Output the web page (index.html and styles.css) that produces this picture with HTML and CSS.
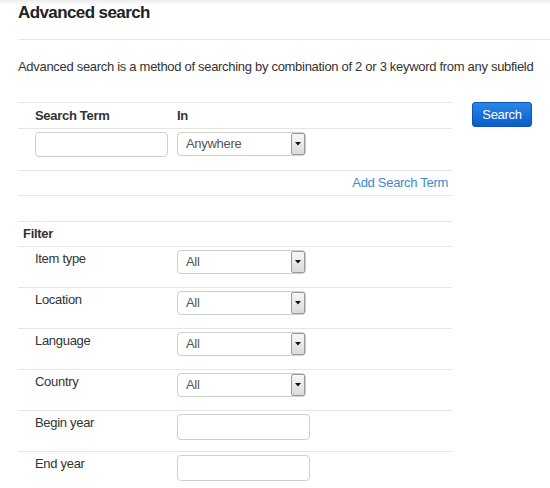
FILE: index.html
```html
<!DOCTYPE html>
<html>
<head>
<meta charset="utf-8">
<link rel="stylesheet" href="styles.css">
</head>
<body>
<div class="topshade"></div>
<div class="page">
  <h1 class="title">Advanced search</h1>
  <p class="desc">Advanced search is a method of searching by combination of 2 or 3 keyword from any subfield</p>

  <div class="main">
    <div class="tables">
      <div class="tbl">
        <div class="row head">
          <div class="c1 b">Search Term</div>
          <div class="c2 b">In</div>
        </div>
        <div class="row inputs">
          <div class="c1"><input class="text term" type="text"></div>
          <div class="c2">
            <div class="sel">
              <span class="sel-val">Anywhere</span>
              <span class="sel-arrow"><svg width="6" height="4" viewBox="0 0 6 4"><path d="M0 0H6L3 3.5Z" fill="#111"/></svg></span>
            </div>
          </div>
        </div>
        <div class="row linkrow">
          <a class="add" href="#">Add Search Term</a>
        </div>
      </div>

      <div class="tbl filter">
        <div class="row head">
          <div class="fhead b">Filter</div>
        </div>
        <div class="row frow">
          <div class="c1 lbl">Item type</div>
          <div class="c2"><div class="sel"><span class="sel-val">All</span><span class="sel-arrow"><svg width="6" height="4" viewBox="0 0 6 4"><path d="M0 0H6L3 3.5Z" fill="#111"/></svg></span></div></div>
        </div>
        <div class="row frow">
          <div class="c1 lbl">Location</div>
          <div class="c2"><div class="sel"><span class="sel-val">All</span><span class="sel-arrow"><svg width="6" height="4" viewBox="0 0 6 4"><path d="M0 0H6L3 3.5Z" fill="#111"/></svg></span></div></div>
        </div>
        <div class="row frow">
          <div class="c1 lbl">Language</div>
          <div class="c2"><div class="sel"><span class="sel-val">All</span><span class="sel-arrow"><svg width="6" height="4" viewBox="0 0 6 4"><path d="M0 0H6L3 3.5Z" fill="#111"/></svg></span></div></div>
        </div>
        <div class="row frow">
          <div class="c1 lbl">Country</div>
          <div class="c2"><div class="sel"><span class="sel-val">All</span><span class="sel-arrow"><svg width="6" height="4" viewBox="0 0 6 4"><path d="M0 0H6L3 3.5Z" fill="#111"/></svg></span></div></div>
        </div>
        <div class="row frow">
          <div class="c1 lbl">Begin year</div>
          <div class="c2"><input class="text year" type="text"></div>
        </div>
        <div class="row frow">
          <div class="c1 lbl">End year</div>
          <div class="c2"><input class="text year" type="text"></div>
        </div>
      </div>
    </div>
    <button class="btn" type="button">Search</button>
  </div>
</div>
</body>
</html>
```
FILE: styles.css
```css
html, body {
  margin: 0;
  padding: 0;
  background: #fff;
}
body {
  font-family: "Liberation Sans", Arial, sans-serif;
  font-size: 13px;
  letter-spacing: -0.3px;
  color: #333;
  width: 550px;
  height: 488px;
  overflow: hidden;
  position: relative;
}
.topshade {
  position: absolute;
  left: 0;
  top: 0;
  right: 0;
  height: 5px;
  background: linear-gradient(#ececec, rgba(255,255,255,0));
}
.page {
  padding-left: 18px;
}
.title {
  margin: 0;
  padding: 3px 0 16px 0;
  font-size: 17px;
  letter-spacing: -0.6px;
  line-height: 20px;
  font-weight: bold;
  color: #222;
  border-bottom: 1px solid #e8e8e8;
}
.desc {
  margin: 19px 0 0 0;
  line-height: 16px;
  white-space: nowrap;
  color: #333;
}
.main {
  display: flex;
  align-items: flex-start;
  margin-top: 27px;
}
.tables {
  width: 434px;
}
.tbl {
  border-bottom: 1px solid #e6e6e6;
}
.tbl.filter {
  border-bottom: none;
  margin-top: 25px;
}
.row {
  display: flex;
  border-top: 1px solid #e6e6e6;
  align-items: flex-start;
}
.b {
  font-weight: bold;
  color: #333;
}
.c1 {
  width: 142px;
  padding-left: 17px;
}
.c2 {
  flex: 1;
}
.head {
  height: 25px;
  line-height: 25px;
}
.filter .head {
  height: 24px;
  line-height: 24px;
}
.fhead {
  padding-left: 5px;
}
.inputs {
  padding-top: 3px;
  box-sizing: border-box;
  height: 42px;
}
.linkrow {
  height: 24px;
  line-height: 24px;
  justify-content: flex-end;
  padding-right: 4px;
}
.add {
  color: #3a8ccc;
  text-decoration: none;
}
.frow {
  height: 40px;
}
.frow .c2 {
  padding-top: 3px;
}
.lbl {
  padding-top: 4px;
  line-height: 16px;
}
.text {
  display: block;
  box-sizing: border-box;
  margin: 0;
  border: 1px solid #cfcfcf;
  border-radius: 4px;
  background: #fff;
  font: inherit;
  padding: 0 6px;
}
.term {
  width: 133px;
  height: 25px;
}
.year {
  width: 133px;
  height: 26px;
}
.sel {
  position: relative;
  box-sizing: border-box;
  width: 129px;
  height: 24px;
  border: 1px solid #cfcfcf;
  border-radius: 4px;
  background: #fff;
  display: flex;
  align-items: center;
}
.sel-val {
  padding-left: 8px;
  color: #555;
  line-height: 16px;
}
.sel-arrow {
  position: absolute;
  right: 0;
  top: 0;
  bottom: 0;
  width: 14px;
  box-sizing: border-box;
  border: 1px solid #9a9a9a;
  border-radius: 2px;
  background: linear-gradient(#f7f7f7, #dadada);
  display: flex;
  align-items: center;
  justify-content: center;
}
.sel-arrow svg {
  display: block;
}
.btn {
  margin-left: 20px;
  width: 60px;
  height: 25px;
  padding: 0;
  border: 1px solid #0a55b8;
  border-radius: 3px;
  background: linear-gradient(#2a86e8, #0a5cc8);
  color: #fff;
  font-family: "Liberation Sans", Arial, sans-serif;
  font-size: 13px;
  letter-spacing: -0.3px;
  line-height: 23px;
}
```
